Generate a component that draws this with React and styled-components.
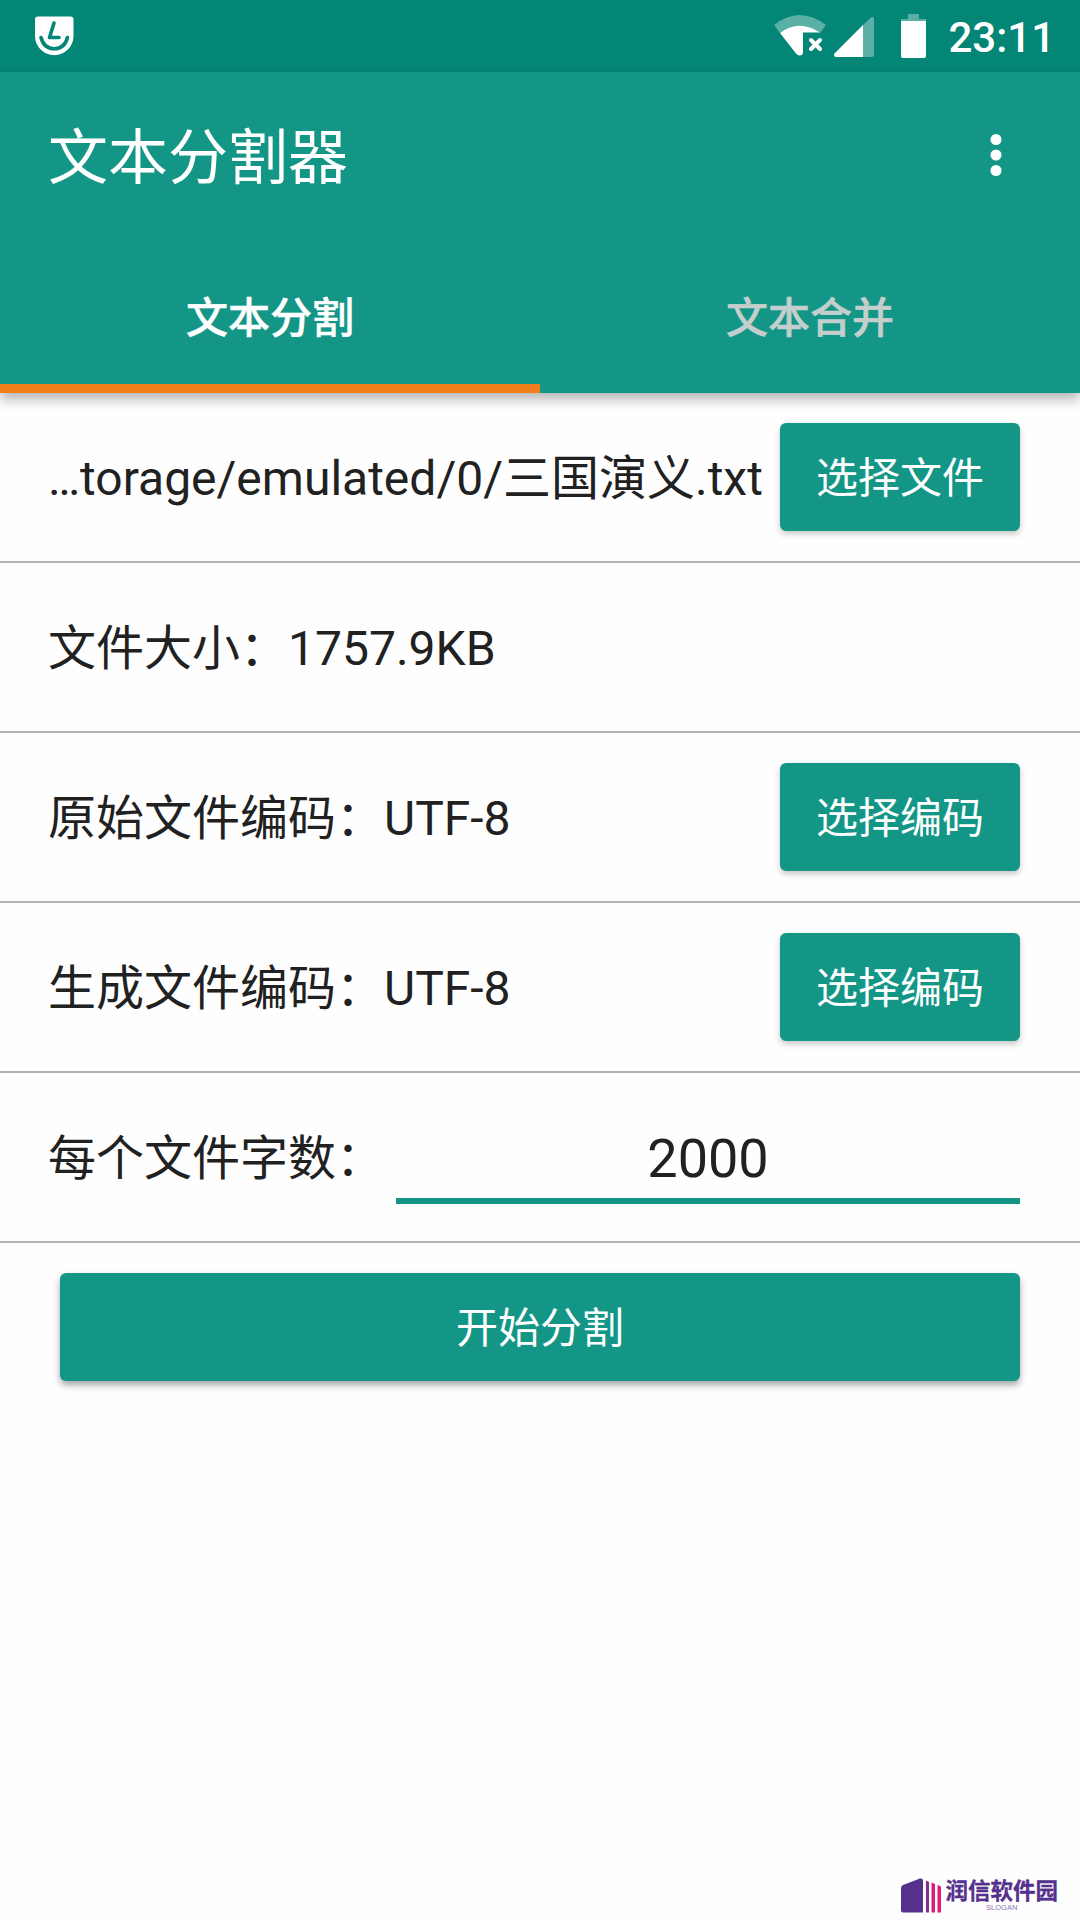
import React, { useState } from "react";
import styled, { createGlobalStyle } from "styled-components";

const teal = "#149687";
const tealDark = "#048677";
const orange = "#f07f1c";
const ink = "#212121";
const cjk = `"Noto Sans CJK SC", sans-serif`;

const GlobalStyle = createGlobalStyle`
  * {
    box-sizing: border-box;
  }
  body {
    margin: 0;
    background: #fefefe;
    color: ${ink};
    font-family: Roboto, ${cjk};
  }
`;

const Screen = styled.div`
  display: flex;
  flex-direction: column;
  width: 1080px;
  height: 1920px;
  overflow: hidden;
`;

const StatusBar = styled.div`
  display: flex;
  align-items: center;
  height: 72px;
  flex: none;
  padding: 0 25px 0 32px;
  background: ${tealDark};
  color: #fff;
`;

const StatusIcons = styled.div`
  display: flex;
  margin-left: auto;
`;

const Clock = styled.span`
  margin-left: 18px;
  padding-top: 3px;
  font-size: 42px;
  line-height: 48px;
  font-weight: 500;
`;

const Header = styled.header`
  flex: none;
  height: 321px;
  background: ${teal};
  color: #fff;
  box-shadow: 0 6px 12px rgba(0, 0, 0, 0.3);
`;

const Toolbar = styled.div`
  display: flex;
  align-items: center;
  justify-content: space-between;
  height: 168px;
  padding: 0 72px 0 48px;
`;

const AppTitle = styled.h1`
  margin: 0;
  padding-top: 6px;
  font-size: 60px;
  line-height: 72px;
  font-weight: 400;
`;

const MenuButton = styled.button`
  display: flex;
  padding: 0 0 2px;
  border: none;
  background: none;
`;

const Tabs = styled.nav`
  display: flex;
  height: 153px;
`;

const Tab = styled.button`
  flex: 1;
  padding: 4px 0 0;
  border: none;
  border-bottom: 9px solid ${props => (props.$selected ? orange : teal)};
  background: none;
  color: ${props => (props.$selected ? "#fff" : "#c4cfcd")};
  font-family: Roboto, ${cjk};
  font-size: 42px;
  font-weight: 500;
  -webkit-text-stroke: 0.5px currentColor;
`;

const Row = styled.div`
  display: flex;
  align-items: center;
  justify-content: space-between;
  height: 170px;
  padding: 0 60px 0 48px;
  border-bottom: 2px solid #b2b2b2;
`;

const Label = styled.span`
  padding-top: 4px;
  font-size: 48px;
  line-height: 60px;
  white-space: nowrap;
`;

const Button = styled.button`
  width: ${props => (props.$wide ? "960px" : "240px")};
  height: 108px;
  flex: none;
  margin: ${props => (props.$wide ? "30px 60px" : "0")};
  padding: 0 0 5px;
  border: none;
  border-radius: 6px;
  background: ${teal};
  color: #fff;
  box-shadow: ${props =>
    props.$wide
      ? "0 4px 7px rgba(0, 0, 0, 0.35)"
      : "0 3px 6px rgba(0, 0, 0, 0.22)"};
  font-family: Roboto, ${cjk};
  font-size: 42px;
`;

const CountInput = styled.input`
  width: 624px;
  height: 90px;
  margin-top: 4px;
  padding: 4px 0 0;
  border: none;
  border-bottom: 6px solid ${teal};
  outline: none;
  background: none;
  color: ${ink};
  font-family: Roboto, ${cjk};
  font-size: 54px;
  text-align: center;
`;

const Footer = styled.footer`
  display: flex;
  justify-content: flex-end;
  margin-top: auto;
  padding: 0 22px 7px 0;
`;

const Brand = styled.div`
  display: flex;
  flex-direction: column;
  align-items: center;
  margin-left: 2px;
  color: #55308d;
`;

const BrandName = styled.span`
  margin-top: -1px;
  font-family: ${cjk};
  font-size: 22.5px;
  line-height: 24px;
  font-weight: 700;
  -webkit-text-stroke: 0.3px currentColor;
`;

const Slogan = styled.span`
  padding-top: 1px;
  font-family: "Liberation Sans", sans-serif;
  font-size: 7.5px;
  line-height: 11px;
  color: #8a72ae;
`;

const AppBadge = () => (
  <svg width="44" height="44" viewBox="32 14 44 44" fill="none">
    <path
      d="M38 16.500H70.500Q73.500 16.500 73.500 19.500V36A19.250 19.250 0 0 1 35 36V19.500Q35 16.500 38 16.500Z"
      fill="#fff"
    />
    <g stroke={tealDark} strokeLinecap="round" strokeLinejoin="round">
      <path d="M54 23L49.500 37.500H59" strokeWidth="3.600" />
      <path d="M41 37.500C43 45 48 48.800 54.200 48.800S65.500 45 67.500 37.500" strokeWidth="3.600" />
    </g>
  </svg>
);

const SignalIcons = () => (
  <svg width="160" height="48" viewBox="770 12 160 48" fill="#fff">
    <path d="M774 25Q799.500 5 826 25L820 33Q799.500 19 780 33Z" opacity="0.35" />
    <path d="M780 33Q799 19 820 32.500H803V52Q803 55.500 799.500 55.500Q797.500 55.500 796 53.500Z" />
    <path
      d="M811 40L820 49M820 40L811 49"
      fill="none"
      stroke="#fff"
      strokeWidth="4"
      strokeLinecap="round"
    />
    <path d="M863 25L871 17.500Q874 16 874 19V55Q874 57 872 57H863Z" opacity="0.35" />
    <path d="M863 25V57H836Q833 56 834.500 53.500Z" />
    <path d="M908 14H919V19H926V21H901V19H908Z" opacity="0.35" />
    <path d="M901 21H926V56Q926 58 924 58H903Q901 58 901 56Z" />
  </svg>
);

const MoreIcon = () => (
  <svg width="24" height="48" viewBox="0 0 24 48" fill="#fff">
    <circle cx="12" cy="8.500" r="5.500" />
    <circle cx="12" cy="24" r="5.500" />
    <circle cx="12" cy="39.500" r="5.500" />
  </svg>
);

const BrandMark = () => (
  <svg width="42" height="35" viewBox="0 0 42 35">
    <path d="M0 10Q0 8 2 7L19 0.500Q22 0 22 2.500V34.500H2Q0 34.500 0 32.500Z" fill="#55308d" />
    <path d="M25 2.500L28 4V34.500H25Z" fill="#8b2c8e" />
    <path d="M30.500 4.500L34 6V34.500H30.500Z" fill="#d41e82" />
    <path d="M36.500 7L40 8.500V34.500H36.500Z" fill="#e5187e" />
  </svg>
);

const App = () => {
  const [tab, setTab] = useState("split");
  const [count, setCount] = useState("2000");

  return (
    <Screen>
      <GlobalStyle />
      <StatusBar>
        <AppBadge />
        <StatusIcons>
          <SignalIcons />
        </StatusIcons>
        <Clock>23:11</Clock>
      </StatusBar>
      <Header>
        <Toolbar>
          <AppTitle>文本分割器</AppTitle>
          <MenuButton>
            <MoreIcon />
          </MenuButton>
        </Toolbar>
        <Tabs>
          <Tab $selected={tab === "split"} onClick={() => setTab("split")}>
            文本分割
          </Tab>
          <Tab $selected={tab === "merge"} onClick={() => setTab("merge")}>
            文本合并
          </Tab>
        </Tabs>
      </Header>
      <Row>
        <Label>…torage/emulated/0/三国演义.txt</Label>
        <Button>选择文件</Button>
      </Row>
      <Row>
        <Label>文件大小：1757.9KB</Label>
      </Row>
      <Row>
        <Label>原始文件编码：UTF-8</Label>
        <Button>选择编码</Button>
      </Row>
      <Row>
        <Label>生成文件编码：UTF-8</Label>
        <Button>选择编码</Button>
      </Row>
      <Row>
        <Label>每个文件字数：</Label>
        <CountInput value={count} onChange={e => setCount(e.target.value)} />
      </Row>
      <Button $wide>开始分割</Button>
      <Footer>
        <BrandMark />
        <Brand>
          <BrandName>润信软件园</BrandName>
          <Slogan>SLOGAN</Slogan>
        </Brand>
      </Footer>
    </Screen>
  );
};

export default App;
